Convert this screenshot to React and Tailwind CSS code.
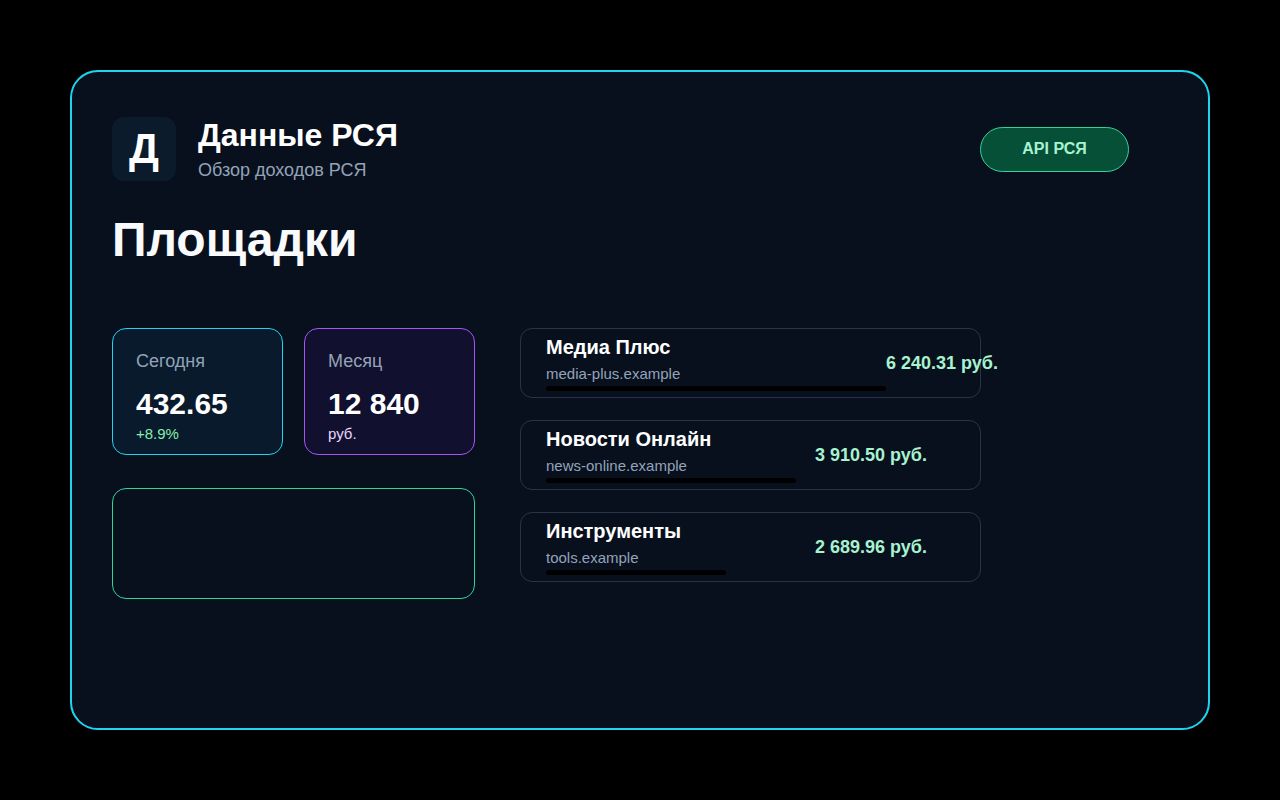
import React from "react";

const sites = [
  { name: "Медиа Плюс", domain: "media-plus.example", amount: "6 240.31 руб.", bar: 340 },
  { name: "Новости Онлайн", domain: "news-online.example", amount: "3 910.50 руб.", bar: 250 },
  { name: "Инструменты", domain: "tools.example", amount: "2 689.96 руб.", bar: 180 },
];

function StatCard({ label, value, sub, className = "", subClass = "" }) {
  return (
    <div className={`w-[171px] h-[127px] rounded-[14px] border pt-[20px] pl-[23px] ${className}`}>
      <div className="text-[18px] leading-6 text-[#94a3b8]">{label}</div>
      <div className="mt-[13px] text-[30px] leading-[36px] font-bold text-white">{value}</div>
      <div className={`mt-[2px] text-[15px] leading-5 ${subClass}`}>{sub}</div>
    </div>
  );
}

function SiteRow({ site }) {
  return (
    <div className="flex items-center justify-between rounded-[12px] border border-[#283445] pl-[25px] pr-[53px] pt-[6px] pb-[6px]">
      <div className="flex flex-col">
        <div className="text-[20px] leading-6 font-bold text-white">{site.name}</div>
        <div className="mt-[5px] text-[15px] leading-5 text-[#94a3b8]">{site.domain}</div>
        <div className="mt-[2px] h-[5px] rounded-full bg-black" style={{ width: site.bar }} />
      </div>
      <div className="whitespace-nowrap text-[18px] font-bold text-[#a7f3d0]">{site.amount}</div>
    </div>
  );
}

export default function App() {
  return (
    <div className="min-h-screen bg-black p-[70px] font-['Liberation_Sans',Arial,sans-serif]">
      <div className="h-[660px] rounded-[28px] border-2 border-[#22d3ee] bg-[#08101e] px-[40px] pt-[44px]">
        <div className="flex w-[1017px] items-center justify-between">
          <div className="flex items-center gap-[22px]">
            <div className="flex h-16 w-16 items-center justify-center rounded-[12px] bg-[#0b1b2b]">
              <span className="text-[42px] font-bold leading-none text-white">Д</span>
            </div>
            <div className="flex flex-col">
              <div className="text-[32px] leading-[38px] font-bold text-white">Данные РСЯ</div>
              <div className="mt-[4px] text-[18px] leading-6 text-[#94a3b8]">Обзор доходов РСЯ</div>
            </div>
          </div>
          <button className="h-[45px] w-[149px] rounded-full border border-[#34d399] bg-[#065038] text-[16px] font-bold text-[#a7f3d0]">
            API РСЯ
          </button>
        </div>

        <h1 className="mt-[34px] text-[48px] leading-[48px] font-bold text-[#f8fafc]">Площадки</h1>

        <div className="mt-[64px] flex gap-[45px]">
          <div className="flex w-[363px] flex-col gap-[33px]">
            <div className="flex gap-[21px]">
              <StatCard
                label="Сегодня"
                value="432.65"
                sub="+8.9%"
                className="border-[#22d3ee] bg-[#081a2b]"
                subClass="text-[#86efac]"
              />
              <StatCard
                label="Месяц"
                value="12 840"
                sub="руб."
                className="border-[#a855f7] bg-[#11102e]"
                subClass="text-[#e9d5ff]"
              />
            </div>
            <div className="h-[111px] rounded-[14px] border border-[#34d399] bg-[#08101e]" />
          </div>

          <div className="flex w-[461px] flex-col gap-[22px]">
            {sites.map((s) => (
              <SiteRow key={s.domain} site={s} />
            ))}
          </div>
        </div>
      </div>
    </div>
  );
}
